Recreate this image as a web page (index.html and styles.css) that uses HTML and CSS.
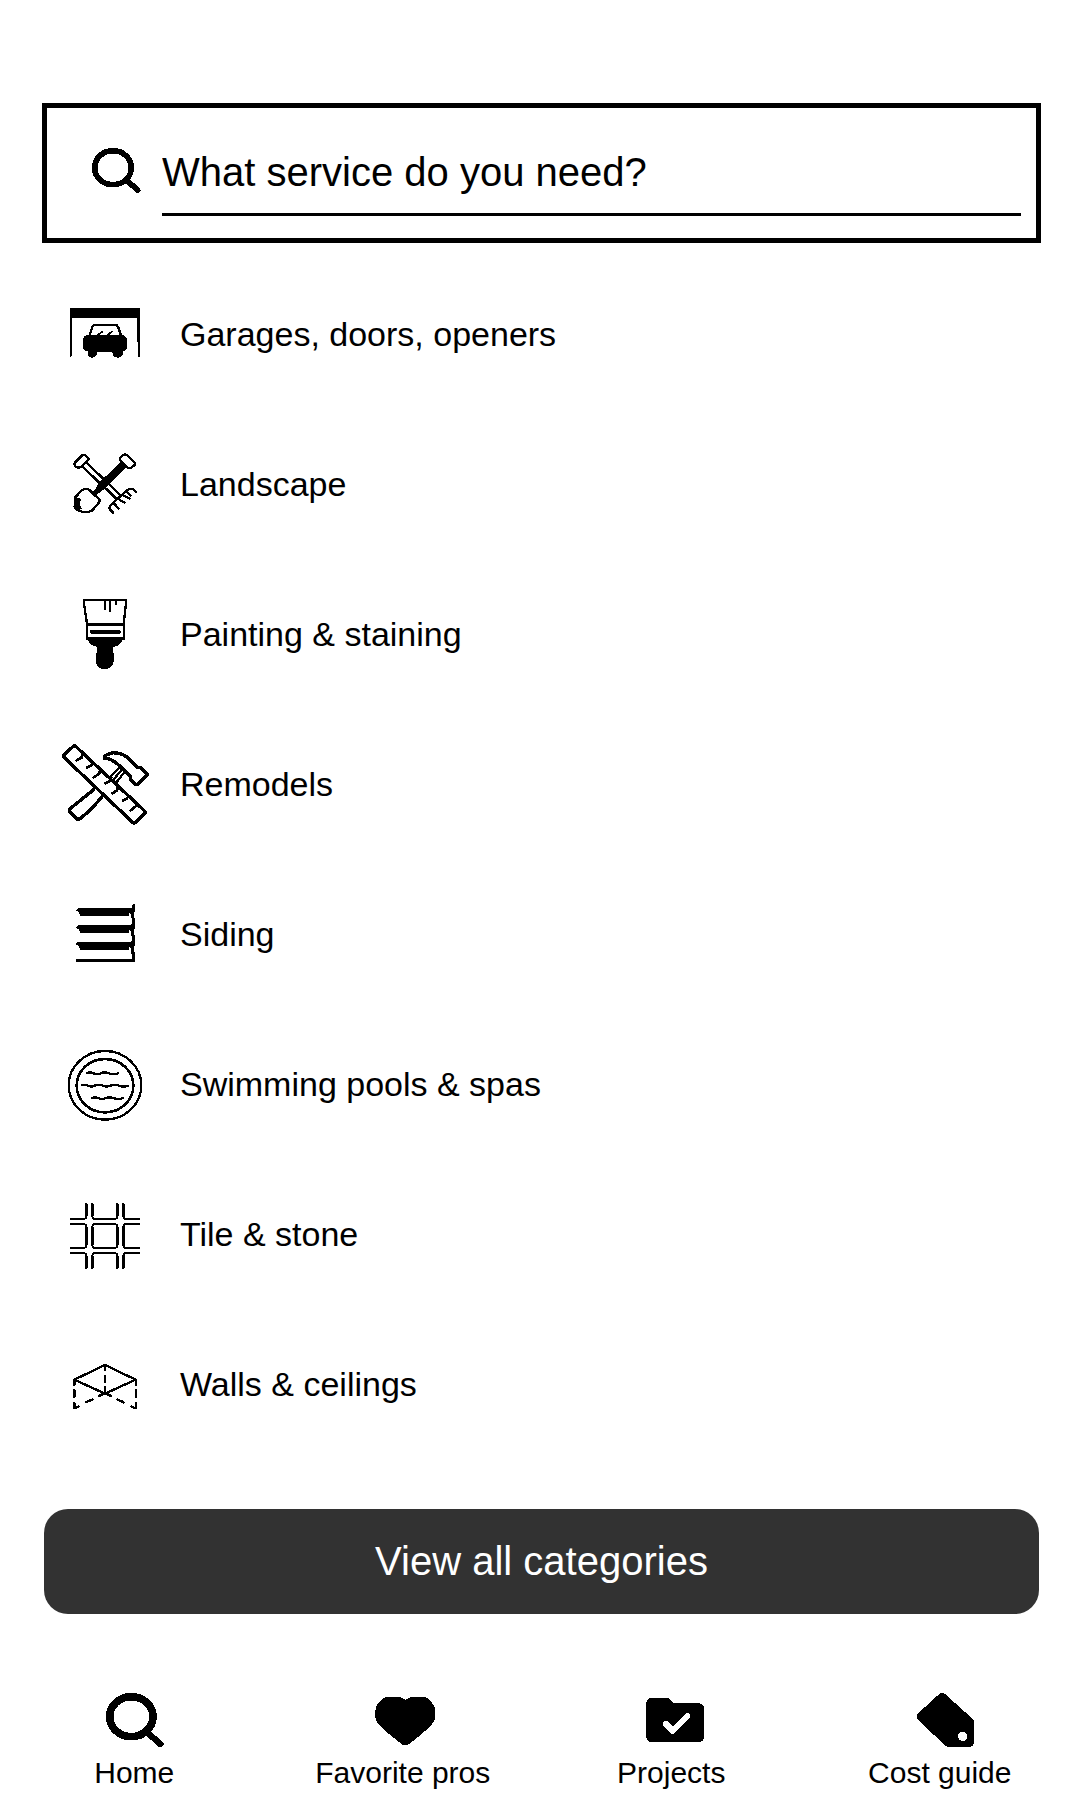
FILE: index.html
```html
<!DOCTYPE html>
<html lang="en">
<head>
<meta charset="utf-8">
<meta name="viewport" content="width=device-width, initial-scale=1">
<title>Find a service</title>
<link rel="stylesheet" href="styles.css">
</head>
<body>
<main class="page">
  <form class="search" role="search">
    <label class="search-label" for="service" aria-label="Search">
      <svg class="search-icon" viewBox="180 171 162 162" aria-hidden="true"><ellipse cx="249" cy="233" rx="55" ry="51" stroke-width="17"/><path d="M290 270L323 301" stroke-width="17"/></svg>
    </label>
    <input class="search-input" id="service" type="text" placeholder="What service do you need?">
  </form>

  <ul class="categories">
    <li><a class="category" href="#garages">
      <svg class="category-icon" viewBox="30 6 270 252" aria-hidden="true">
        <path class="solid" d="M60 57Q60 54 64 54H266Q270 54 270 58V201H264V158L261 154V84H67V196L61 201Z"/>
        <path d="M119 136L127 110Q130 104 137 104H194Q201 104 204 110L213 136" stroke-width="7"/>
        <path d="M141 136L157 125M172 136L186 124" stroke-width="5"/>
        <path class="solid" d="M99 145Q102 138 112 135H140L147 128L149 134H172L179 127L181 134H218Q229 138 231 150V172Q230 180 218 184V196Q213 203 204 203Q194 203 189 197L187 186H142L139 197Q134 203 126 203Q116 203 114 197V185Q102 182 99 174Z"/>
      </svg>
      <span>Garages, doors, openers</span></a></li>
    <li><a class="category" href="#landscape">
      <svg class="category-icon" viewBox="30 456 270 252" aria-hidden="true">
        <g stroke-width="7">
          <path d="M74 518L97 496Q101 493 105 495L115 504Q117 508 114 511L94 530Q88 534 82 532L75 529Q72 524 74 518Z"/>
          <path d="M211 502L220 495Q226 492 231 496L253 517Q257 522 253 526L242 534Q236 535 231 531L212 514Q208 508 211 502Z"/>
          <path d="M98 530L150 580M109 518L160 566M166 594L199 626M180 586L210 614"/>
          <path d="M189 668L178 656Q179 646 190 638L226 605Q240 592 250 598L259 606M190 638L205 655M203 626L224 638M216 614L238 625M228 602L242 616"/>
          <path d="M75 623L94 602Q108 593 118 600L148 628Q151 632 145 640L127 661Q113 670 96 665Q78 661 74 650Z"/>
        </g>
        <path class="solid" d="M211 516L230 532L177 583L171 591L144 611L136 623L122 609L134 600L150 573L164 562ZM74 624L96 626L91 633V648L98 657L89 659L75 652Z"/>
      </svg>
      <span>Landscape</span></a></li>
    <li><a class="category" href="#painting">
      <svg class="category-icon" viewBox="30 36 270 252" aria-hidden="true">
        <path d="M102 70V60H228V70L221 132V176H111V132Z" stroke-width="7"/>
        <path d="M111 132H221" stroke-width="9"/>
        <path d="M126 155H206" stroke-width="13"/>
        <path d="M165 61V88M180 61V95M197 61V73" stroke-width="6"/>
        <path class="solid" d="M109 170H221V178L216 180Q215 191 203 197L190 201Q186 210 191 222V246Q187 267 165 267Q142 267 138 246V222Q144 210 142 201L128 196Q116 191 115 180L109 178Z"/>
      </svg>
      <span>Painting &amp; staining</span></a></li>
    <li><a class="category" href="#remodels">
      <svg class="category-icon" viewBox="30 486 270 252" aria-hidden="true">
        <g stroke-width="10">
          <path d="M41 527Q42 523 70 499Q74 496 78 500L285 694Q287 698 283 702L258 727Q253 731 248 727L44 534Q41 531 41 527Z"/>
          <path d="M96 526L94 534L80 541M127 547L125 555L111 563M150 573L147 582L131 592M184 592L182 602L166 610M204 620L201 631L187 640M235 649L231 655L219 662M260 673L257 679L242 691" stroke-width="8"/>
          <path d="M131 629L59 687Q56 692 60 697L79 716Q85 720 91 715L121 690L156 651"/>
          <path d="M164 536L165 527L184 519Q208 516 229 530L262 563Q270 560 278 568L293 583L264 613Q257 616 252 610L242 600V591L224 573Q205 550 182 539Q174 534 164 536Z"/>
          <path d="M211 559L178 593M225 574L202 604M216 568L190 600" stroke-width="7"/>
        </g>
      </svg>
      <span>Remodels</span></a></li>
    <li><a class="category" href="#siding">
      <svg class="category-icon" viewBox="30 6 270 252" aria-hidden="true">
        <path class="solid" d="M76 61L88 54H246V48L251 42H255V65H252L255 101V116H252L255 152V167H252L255 203V216H79V207H246L243 177L236 170V180H90L87 169L78 163L82 156H243L246 148L243 126L236 119V129H90L87 118L76 112L88 105H243L246 97L243 74L236 68V78H90L87 66Z"/>
      </svg>
      <span>Siding</span></a></li>
    <li><a class="category" href="#pools">
      <svg class="category-icon" viewBox="30 456 270 252" aria-hidden="true">
        <ellipse cx="165" cy="586" rx="109" ry="103" stroke-width="7"/>
        <ellipse cx="165" cy="587" rx="85" ry="80" stroke-width="8"/>
        <path d="M111 549Q121 545 130 550Q142 555 152 550Q164 544 176 550Q190 556 204 550M96 586Q105 582 114 587Q124 592 134 587Q146 581 158 587Q170 592 182 587Q194 581 206 587Q220 592 234 588M127 624Q137 620 146 625Q156 629 166 625Q178 620 190 624Q204 630 219 624" stroke-width="7"/>
      </svg>
      <span>Swimming pools &amp; spas</span></a></li>
    <li><a class="category" href="#tile">
      <svg class="category-icon" viewBox="30 6 270 252" aria-hidden="true">
        <path d="M109 42V78Q109 87 100 87H63M127 42V78Q127 87 136 87H192Q202 87 202 78V42M220 42V78Q220 87 230 87H268M63 102H100Q109 102 109 111V165Q109 174 100 174H63M268 102H230Q220 102 220 111V165Q220 174 230 174H268M127 111Q127 102 136 102H192Q202 102 202 111V165Q202 174 192 174H136Q127 174 127 165ZM63 189H100Q109 189 109 198V234M127 234V198Q127 189 136 189H192Q202 189 202 198V234M220 234V198Q220 189 230 189H268" stroke-width="6"/>
        <path d="M109 44V78M127 44V78M202 44V78M220 44V78M109 111V165M127 111V165M202 111V165M220 111V165M109 198V232M127 198V232M202 198V232M220 198V232M65 189H100M136 189H192M230 189H266" stroke-width="8"/>
      </svg>
      <span>Tile &amp; stone</span></a></li>
    <li><a class="category" href="#walls">
      <svg class="category-icon" viewBox="30 456 270 252" aria-hidden="true">
        <path d="M73 569L165 525L257 569L165 611Z" stroke-width="7"/>
        <path d="M73 569V586M73 601V622M73 638V655L86 649M257 569V586M257 601V622M257 638V655L244 649M164 525V541M164 557V577M164 591V609M108 637L128 628M202 628L221 637M147 618L165 609L183 618" stroke-width="7"/>
      </svg>
      <span>Walls &amp; ceilings</span></a></li>
  </ul>

  <button class="view-all" type="button">View all categories</button>
</main>

<nav class="tabs" aria-label="Main">
  <a class="tab" href="#home">
    <svg class="tab-icon" viewBox="214 600 198 180" aria-hidden="true"><ellipse cx="305" cy="680" rx="65" ry="60" stroke-width="23"/><path d="M352 727L392 762" stroke-width="19"/></svg>
    <span>Home</span></a>
  <a class="tab" href="#favorites">
    <svg class="tab-icon" viewBox="89 600 198 180" aria-hidden="true"><path class="solid" d="M195 630Q208 620 225 620H244Q263 621 274 637Q285 650 285 667V683Q282 697 269 710Q240 737 205 763Q195 768 185 763Q150 737 121 710Q108 697 105 683V667Q105 650 116 637Q127 621 148 620H165Q182 620 195 630Z"/></svg>
    <span>Favorite pros</span></a>
  <a class="tab" href="#projects">
    <svg class="tab-icon" viewBox="893 600 198 180" aria-hidden="true"><path class="solid" d="M918 638Q919 624 934 624H981Q987 624 1000 639H1074Q1091 641 1091 656V740Q1090 755 1076 756H934Q919 755 918 742Z"/><path class="check" d="M977 702L997 722L1041 678" stroke-width="18"/></svg>
    <span>Projects</span></a>
  <a class="tab" href="#costs">
    <svg class="tab-icon" viewBox="680 600 198 180" aria-hidden="true"><path class="solid" d="M779 610Q786 607 793 611L874 684Q882 692 882 700V755Q881 770 866 771H804Q798 770 792 764L712 689Q705 680 712 671Z"/><circle class="hole" cx="847" cy="739" r="14"/></svg>
    <span>Cost guide</span></a>
</nav>
</body>
</html>
```
FILE: styles.css
```css
* {
  box-sizing: border-box;
}

body {
  margin: 0;
  background: #fff;
  color: #000;
  font-family: "Liberation Sans", Arial, sans-serif;
}

a {
  color: inherit;
  text-decoration: none;
}

svg {
  display: block;
  flex: none;
  overflow: visible;
  fill: none;
  stroke: #000;
  stroke-linecap: round;
  stroke-linejoin: round;
  shape-rendering: crispEdges;
}

.solid {
  fill: #000;
  stroke: none;
}

.check {
  stroke: #fff;
}

.hole {
  fill: #fff;
  stroke: none;
}

.page {
  padding: 103px 39px 0 42px;
}

.search {
  display: flex;
  align-items: center;
  gap: 18px;
  padding: 23px 15px 22px 43px;
  border: 5px solid #000;
}

.search-icon {
  width: 54px;
  height: 54px;
}

.search-input {
  flex: 1;
  min-width: 0;
  height: 85px;
  padding: 0;
  border: 0;
  border-bottom: 3px solid #000;
  border-radius: 0;
  outline: 0;
  background: transparent;
  color: #000;
  font: 40px "Liberation Sans", Arial, sans-serif;
}

.search-input::placeholder {
  color: #000;
  opacity: 1;
}

.categories {
  margin: 16px 0 50px;
  padding: 0 0 0 18px;
  list-style: none;
}

.category {
  display: flex;
  align-items: center;
  gap: 30px;
  height: 150px;
  font-size: 34px;
}

.category-icon {
  width: 90px;
  height: 84px;
}

.view-all {
  display: block;
  width: calc(100% - 4px);
  height: 105px;
  margin: 0 auto;
  padding: 0;
  border: 0;
  border-radius: 24px;
  background: #323232;
  color: #fff;
  font: 40px "Liberation Sans", Arial, sans-serif;
}

.tabs {
  display: grid;
  grid-template-columns: repeat(4, 1fr);
  margin-top: 76px;
  padding: 0 6px 9px 0;
}

.tab {
  display: flex;
  flex-direction: column;
  align-items: center;
  gap: 6px;
  font-size: 30px;
  line-height: 34px;
}

.tab-icon {
  width: 66px;
  height: 60px;
}
```
